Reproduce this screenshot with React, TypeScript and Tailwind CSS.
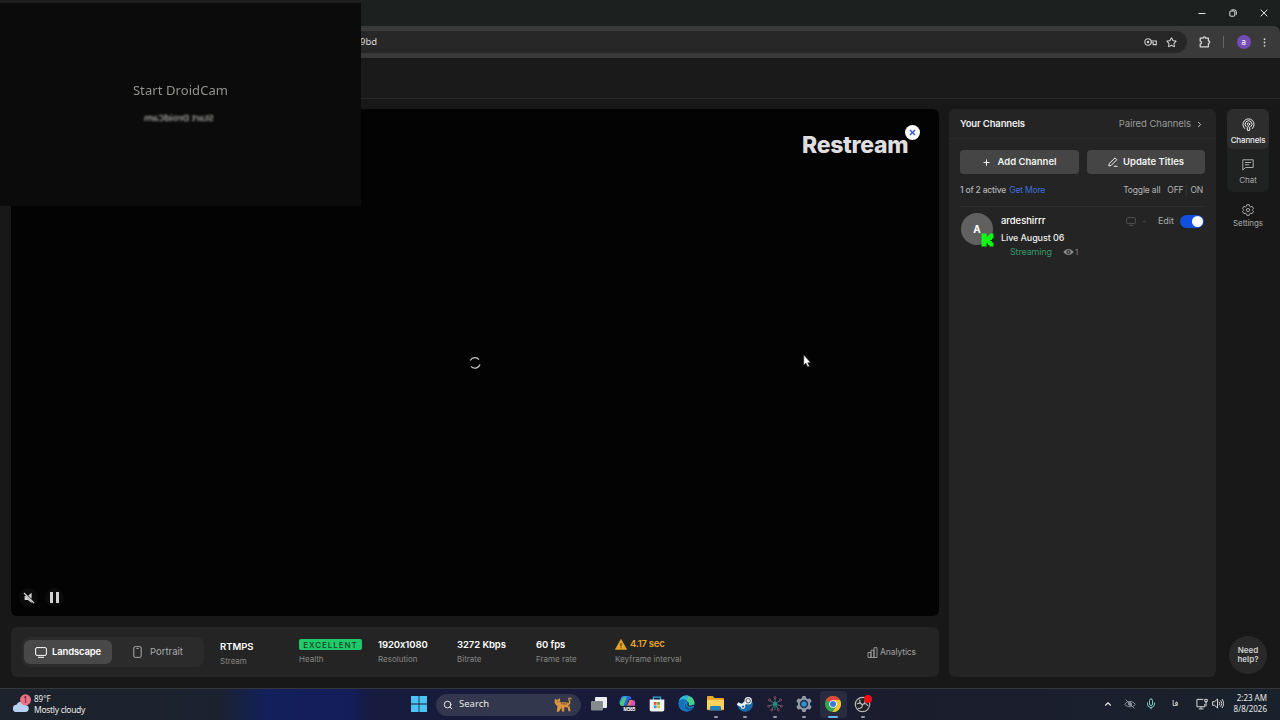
import type { ReactNode } from "react";
import { ChevronRight, ChevronUp, Mic, Plus, Search, Star } from "lucide-react";

interface Stat {
  value: ReactNode;
  label: string;
}

const WarningIcon = () => (
  <svg className="h-[11px] w-3" viewBox="0 0 12 11">
    <path d="M6 .3 11.8 10.6H.2z" fill="#e5a52b" stroke="#e5a52b" strokeWidth=".5" strokeLinejoin="round" />
    <path d="M6 4v3.2M6 8.2v1.1" stroke="#3a2c10" strokeWidth="1.1" />
  </svg>
);

const stats: Stat[] = [
  { value: "1920x1080", label: "Resolution" },
  { value: "3272 Kbps", label: "Bitrate" },
  { value: "60 fps", label: "Frame rate" },
];

const BrowserChrome = () => (
  <header className="shrink-0">
    <div className="flex h-[26px] items-center justify-end bg-[#1c201f] pr-[12px]">
      <div className="flex items-center gap-[23px] text-[#e4e4e4]">
        <svg className="h-2 w-2" viewBox="0 0 8 8" fill="none" stroke="currentColor">
          <path d="M.5 4.5h7" />
        </svg>
        <svg className="h-2 w-2" viewBox="0 0 8 8" fill="none" stroke="currentColor">
          <rect x=".8" y="2" width="5" height="5.2" rx="1" />
          <path d="M2.4.9h3.2A1.8 1.8 0 0 1 7.3 2.7v3" />
        </svg>
        <svg className="h-2 w-2" viewBox="0 0 8 8" fill="none" stroke="currentColor">
          <path d="m.7.7 6.6 6.6M7.3.7.7 7.3" />
        </svg>
      </div>
    </div>
    <div className="flex h-8 items-center rounded-tr-md bg-[#3a3a3a] pr-[14px]">
      <div className="flex h-[22px] w-[1187px] items-center justify-between rounded-r-full bg-[#272727] pr-[10px] pl-[360px]">
        <span className="font-['Noto_Sans',sans-serif] text-[9.5px] text-[#d5d5d5]">9bd</span>
        <div className="flex items-center gap-[9px] text-[#d0d0d0]">
          <svg className="h-2 w-[13px]" viewBox="0 0 13 8" fill="none" stroke="currentColor" strokeWidth="1.1">
            <circle cx="4" cy="4" r="3.2" />
            <circle cx="4" cy="4" r=".7" />
            <path d="M7 3h5.3v3.6H9.2V4.8H7" />
          </svg>
          <Star className="size-[11px]" strokeWidth={2.3} />
        </div>
      </div>
      <div className="flex flex-1 items-center justify-between pl-3 text-[#d6d6d6]">
        <svg className="h-3 w-3" viewBox="0 0 12 12" fill="none" stroke="currentColor" strokeWidth="1.3" strokeLinejoin="round">
          <path d="M1.2 2.2h3C4.2.4 6.6.4 6.6 2.2h2.8V5c1.8 0 1.8 2.3 0 2.3v3.5H1.2V8c1.7-.3 1.7-2.4 0-2.8z" />
        </svg>
        <span className="h-3 w-px bg-[#666]" />
        <span className="flex size-[14px] items-center justify-center rounded-full bg-[#744bb7] text-[8px] text-white">a</span>
        <svg className="h-[9px] w-[3px]" viewBox="0 0 3 9" fill="currentColor">
          <circle cx="1.5" cy="1.2" r=".9" />
          <circle cx="1.5" cy="4.5" r=".9" />
          <circle cx="1.5" cy="7.8" r=".9" />
        </svg>
      </div>
    </div>
  </header>
);

const CameraOverlay = () => (
  <div className="absolute top-0 left-0 flex h-[206px] w-[361px] flex-col items-center border-t-[3px] border-[#1e1f1f] bg-[#0b0b0b] pt-[78px] font-['Noto_Sans',sans-serif] text-[#92928f]">
    <p className="text-[13px] leading-[18px] tracking-[0.08px] blur-[0.5px]">Start DroidCam</p>
    <p className="mt-[12px] mr-1 -scale-x-100 text-[9.5px] leading-[14px] font-semibold tracking-[-0.1px] text-[#a8a8a4] blur-[0.8px]">
      Start DroidCam
    </p>
  </div>
);

const Player = () => (
  <section className="relative h-[507px] rounded-md bg-[#030303]">
    <div className="absolute top-[21px] left-[791px] text-[23px] leading-[31px] font-extrabold tracking-[-0.3px] text-[#dedede]">
      Restream
    </div>
    <div className="absolute top-4 left-[894px] flex size-[15px] items-center justify-center rounded-full bg-white">
      <svg className="size-[7px]" viewBox="0 0 7 7" stroke="#3d5fd2" strokeWidth="1.6">
        <path d="m1 1 5 5M6 1 1 6" />
      </svg>
    </div>
    <svg className="absolute top-[248px] left-[458px] size-3" viewBox="0 0 12 12" fill="none" stroke="#c8c8c8" strokeWidth="1.2">
      <path d="M1.3 3.6a5.2 5.2 0 0 1 8.7-1M2 9.3a5.2 5.2 0 0 0 9-1.9" />
    </svg>
    <svg className="absolute top-[245px] left-[792px] h-[14px] w-[9px]" viewBox="0 0 9 14" fill="#fff" stroke="#111" strokeWidth=".6">
      <path d="M.7.8v10.4l2.3-2 1.7 3.9 1.8-.8-1.7-3.6h3z" />
    </svg>
    <div className="absolute bottom-[9px] left-[8px] flex gap-[7px] text-[#d2d2d2]">
      <span className="flex size-[19px] items-center justify-center rounded-full bg-[#0b0b0b]">
        <svg className="size-3" viewBox="0 0 12 12" fill="currentColor">
          <path d="M1.6 4.1h1.7l5.3 5.2v1.8L5 8.1H1.6zM5.300 3.500l3.300-2.700v6z" />
          <path d="m1 1 10 10" stroke="currentColor" strokeWidth="1.2" />
        </svg>
      </span>
      <span className="flex size-[19px] items-center justify-center gap-[3px] rounded-full bg-[#0b0b0b]">
        <i className="h-[11px] w-[3px] bg-current" />
        <i className="h-[11px] w-[3px] bg-current" />
      </span>
    </div>
  </section>
);

const StreamBar = () => (
  <section className="mt-[11px] flex h-[50px] items-center rounded-md bg-[#242424] pr-[23px] pl-[11px]">
    <div className="flex h-[30px] w-[182px] items-center rounded-lg bg-[#2b2b2b] pl-[2px] text-[9.5px]">
      <div className="flex h-6 w-[88px] items-center justify-center gap-[5px] rounded-md bg-[#484848] font-semibold text-white">
        <svg className="h-[11px] w-3" viewBox="0 0 12 11" fill="none" stroke="currentColor">
          <rect x=".6" y=".6" width="10.8" height="7.8" rx="1.4" />
          <path d="M3 10.3h6" />
        </svg>
        <span className="pt-px tracking-[-0.15px]">Landscape</span>
      </div>
      <div className="flex flex-1 items-center justify-center gap-[8px] text-[#aaa]">
        <svg className="h-3 w-[9px]" viewBox="0 0 9 12" fill="none" stroke="currentColor">
          <rect x=".8" y=".6" width="7.4" height="10.8" rx="1.4" />
          <path d="M3.5 2.5h2" />
        </svg>
        <span className="pt-px">Portrait</span>
      </div>
    </div>
    <div className="flex pl-4 text-[8px] text-[#878787]">
      <div className="w-[79px] pt-[3px]">
        <div className="h-[14px] text-[9.5px] leading-[14px] font-semibold text-white">RTMPS</div>
        <div className="leading-[14px]">Stream</div>
      </div>
      <div className="w-[79px] pt-px">
        <div className="flex h-[14px] items-center">
          <span className="flex h-[11px] w-[63px] items-center justify-center rounded-[2px] bg-[#20ca68] text-[8px] font-medium tracking-[0.95px] text-[#123f26]">
            EXCELLENT
          </span>
        </div>
        <div className="leading-[14px]">Health</div>
      </div>
      {stats.map((stat) => (
        <div key={stat.label} className="w-[79px] pt-px">
          <div className="h-[14px] text-[9.5px] leading-[14px] font-semibold tracking-[-0.07px] text-white">{stat.value}</div>
          <div className="leading-[14px]">{stat.label}</div>
        </div>
      ))}
      <div className="pt-px">
        <div className="flex h-[14px] items-center gap-[3px] text-[9.5px] font-semibold tracking-[-0.25px] text-[#e5a52b]">
          <WarningIcon />
          4.17 sec
        </div>
        <div className="leading-[14px]">Keyframe interval</div>
      </div>
    </div>
    <div className="ml-auto flex items-center gap-[2px] pt-px text-[8.5px] tracking-[-0.1px] text-[#a2a2a2]">
      <svg className="h-[11px] w-[11px]" viewBox="0 0 10 11" fill="none" stroke="currentColor" strokeWidth=".9">
        <path d="M.5 5.500h3v5h-3zM3.500 3.200h3v7.300h-3zM6.500.7h3v9.800h-3z" />
      </svg>
      Analytics
    </div>
  </section>
);

const ChannelsPanel = () => (
  <aside className="h-[568px] w-[267px] rounded-md bg-[#242424]">
    <div className="flex h-[30px] items-center justify-between border-b border-[#2b2b2b] pt-[2px] pr-3 pl-[11px]">
      <h2 className="text-[9.5px] font-semibold tracking-[-0.15px] text-[#eee]">Your Channels</h2>
      <div className="flex items-center gap-1 text-[9.5px] tracking-[-0.05px] text-[#999]">
        Paired Channels
        <ChevronRight className="size-[9px] text-[#ccc]" strokeWidth={2.5} />
      </div>
    </div>
    <div className="mt-[11px] flex gap-2 pl-[11px] text-[9.5px] font-semibold text-[#f2f2f2]">
      <button className="flex h-6 w-[119px] items-center justify-center gap-[6px] rounded bg-[#454545]">
        <Plus className="size-[9px]" strokeWidth={2.7} />
        Add Channel
      </button>
      <button className="flex h-6 w-[118px] items-center justify-center gap-[5px] rounded bg-[#454545]">
        <svg className="size-[10px]" viewBox="0 0 10 10" fill="none" stroke="currentColor" strokeLinejoin="round">
          <path d="m.8 9 .5-2.5L7 .9l1.8 1.8L3.2 8.4zM5.8 9.3h3.7" />
        </svg>
        Update Titles
      </button>
    </div>
    <div className="mx-[11px] flex h-[33px] items-center justify-between border-b border-[#2d2d2d] pt-px pr-[2px] text-[8.5px] text-[#b4b4b4]">
      <p className="tracking-[-0.18px]">
        <span className="font-medium">1 of 2 active</span> <span className="ml-px text-[#3d70dd]">Get More</span>
      </p>
      <div className="flex items-center tracking-[-0.15px]">
        <span>Toggle all</span>
        <span className="ml-[7px]">OFF</span>
        <span className="mx-[3px] h-[11px] w-px bg-[#323232]" />
        <span>ON</span>
      </div>
    </div>
    <div className="flex pt-[6px] pr-3 pl-3">
      <div className="relative flex size-8 items-center justify-center rounded-full bg-[#606060] text-[10px] font-bold text-white">
        A
        <svg className="absolute top-[20px] left-[20px] h-[14px] w-[13px]" viewBox="0 0 13 14" fill="#0cfc15">
          <path d="M.5.5h5v3H7V2h1.500V.5h4v5H11V7H9.500v1H11v1.500h1.500v4h-4V12H7v-1.500H5.500v3h-5z" />
        </svg>
      </div>
      <div className="flex-1 pl-2">
        <div className="flex h-[16px] items-center text-[9.5px]">
          <span className="font-medium tracking-[-0.05px] text-white">ardeshirrr</span>
          <svg className="ml-auto h-[9px] w-[10px] text-[#505050]" viewBox="0 0 10 9" fill="none" stroke="currentColor">
            <rect x=".6" y=".6" width="8.8" height="6" rx="1" />
            <path d="M3 8.3h4" />
          </svg>
          <span className="ml-[7px] h-px w-[3px] bg-[#444]" />
          <span className="ml-3 text-[9px] text-[#aaa]">Edit</span>
          <span className="ml-[6px] flex h-[13px] w-[24px] items-center justify-end rounded-full bg-[#1150df] pr-[1px]">
            <i className="size-[11px] rounded-full bg-white" />
          </span>
        </div>
        <div className="h-[16px] text-[9px] leading-[18px] font-medium tracking-[-0.1px] text-[#ededed]">Live August 06</div>
        <div className="flex h-[14px] items-center pl-[9px] text-[9px] tracking-[-0.15px] text-[#37966a]">
          Streaming
          <svg className="ml-[11px] h-2 w-[11px]" viewBox="0 0 11 8" fill="none">
            <path d="M.4 4C3 .1 8 .1 10.6 4 8 7.900 3 7.900.4 4z" fill="#8b8b8b" />
            <circle cx="5.500" cy="4" r="2.100" fill="#242424" />
            <circle cx="5.500" cy="4" r="1" fill="#8b8b8b" />
          </svg>
          <span className="ml-[1px] text-[8px] text-[#888]">1</span>
        </div>
      </div>
    </div>
  </aside>
);

const SideNav = () => (
  <nav className="flex w-[42px] flex-col items-center text-[8px] text-[#aaa]">
    <div className="h-[83px] w-full rounded-md bg-[#202221]">
      <div className="flex h-10 flex-col items-center rounded-md bg-[#2d2d2d] pt-[9px] font-medium text-[#ededed]">
        <svg className="size-[13px]" viewBox="0 0 13 13" fill="none" stroke="currentColor" strokeLinecap="round">
          <path d="M2.600 10.500a5.600 5.600 0 1 1 7.800 0M4 8.700a3.500 3.500 0 1 1 5 0" />
          <circle cx="6.500" cy="6.200" r="1.200" />
          <path d="M5.300 12V9.300q1.200-1.300 2.400 0V12z" />
        </svg>
        <span className="mt-[3px] leading-3 tracking-[-0.15px]">Channels</span>
      </div>
      <div className="flex flex-col items-center pt-[10px]">
        <svg className="h-3 w-3" viewBox="0 0 12 12" fill="none" stroke="currentColor">
          <path d="M.8.8h10.4v7.7H3.6L.8 11zM3 3.500h6M3 5.800h4" />
        </svg>
        <span className="mt-[3px] leading-3">Chat</span>
      </div>
    </div>
    <div className="mt-3 flex flex-col items-center">
      <svg className="h-3 w-3" viewBox="0 0 24 24" fill="none" stroke="currentColor" strokeWidth="2" strokeLinejoin="round">
        <path d="m9.500 1.500h5l.8 3.200 2 1.100 3.200-.9 2.500 4.300-2.400 2.300v1l2.400 2.300-2.500 4.300-3.200-.9-2 1.100-.8 3.200h-5l-.8-3.200-2-1.100-3.200.9L1 14.800l2.400-2.300v-1L1 9.200l2.500-4.300 3.200.9 2-1.100z" />
        <circle cx="12" cy="12" r="3.200" />
      </svg>
      <span className="mt-px leading-3 tracking-[-0.1px]">Settings</span>
    </div>
    <div className="mt-auto mb-[3px] flex size-[38px] items-center justify-center rounded-full bg-[#292929] text-center text-[8px] leading-[9px] font-semibold text-[#d0d0d0]">
      Need
      <br />
      help?
    </div>
  </nav>
);

const TaskItem = ({ children, running, active }: { children: ReactNode; running?: boolean; active?: boolean }) => (
  <div className={`relative flex h-[27px] w-[27px] items-center justify-center rounded-sm pb-[2px] ${active ? "bg-[#292c3e]" : ""}`}>
    {children}
    {running && <i className={`absolute bottom-0 h-[2px] rounded-full ${active ? "w-[10px] bg-[#62b8ea]" : "w-1 bg-[#969ba6]"}`} />}
  </div>
);

const Taskbar = () => (
  <footer className="flex h-8 shrink-0 items-center border-t border-[#34383d] bg-[linear-gradient(90deg,#1c232c_0,#1a222f_220px,#13205a_265px,#131d59_350px,#171b3d_375px,#181b36_700px,#1b1d2d_900px,#19222c_1280px)] font-['Noto_Sans',sans-serif] text-[#e8e8e8]">
    <div className="flex w-[405px] items-center self-stretch pb-[2px] pl-3">
      <div className="relative h-5 w-[20px]">
        <svg className="h-5 w-[19px]" viewBox="0 0 18 20">
          <path d="M4 18a3.6 3.6 0 0 1 0-7.2 5 5 0 0 1 9.4.5A3.4 3.4 0 0 1 13.5 18z" fill="#b7d0f4" />
          <circle cx="13" cy="5.8" r="5.500" fill="#ed7185" />
        </svg>
        <span className="absolute top-0 left-[11px] text-[8px] leading-3 text-[#34151c]">1</span>
      </div>
      <div className="ml-[2px] text-[8.5px] leading-[11px]">
        <div className="text-[8px]">89°F</div>
        <div className="tracking-[-0.3px]">Mostly cloudy</div>
      </div>
    </div>
    <div className="flex items-center">
      <TaskItem>
        <svg className="size-4" viewBox="0 0 16 16" fill="#4cc4f3">
          <path d="M0 0h7.600v7.600H0zM8.400 0H16v7.600H8.400zM0 8.400h7.600V16H0zM8.400 8.400H16V16H8.400z" />
        </svg>
      </TaskItem>
      <div className="ml-1 flex h-[22px] w-[145px] items-center rounded-full bg-[#32374d] pr-2 pl-[7px] text-[9.5px]">
        <Search className="size-[10px]" strokeWidth={2.4} />
        <span className="ml-[6px]">Search</span>
        <svg className="ml-auto h-[17px] w-5" viewBox="0 0 20 17">
          <path d="M2 2.500 3.500 3.800 5.300 3.600 7 2l.2 4.300h6.300l2 .7c1.300-1.200 0-2.200-.3-3.300C14.800 1.500 18 .5 18.600 2.800c.2.8-1 .7-1.200.1-1-.6-1.300.4-.5 1.400 1.200 1.700.4 3.500-.7 4.600l.7 3 .7 3.300h-2l-1-3.800-3.300-.5v4.700H9l-.7-4.200-2.300 4.400H3.700l.8-5.800C2.500 9 1 7.300 2 2.500z" fill="#d9953f" />
          <path d="m8.500 6.500.5 2m2-2v2.200m2.400-2-.5 2M15 10l1.500-1M4 5.800h.8m.9 0h.7" stroke="#614025" strokeWidth=".9" />
        </svg>
      </div>
      <div className="ml-[4px] flex gap-[2.35px]">
        <TaskItem>
          <svg className="h-[15px] w-4" viewBox="0 0 16 15">
            <rect x="4" y="1" width="12" height="11" rx="1" fill="#eee" />
            <rect x="0" y="5" width="12" height="9.500" rx="1" fill="#868b8f" />
          </svg>
        </TaskItem>
        <TaskItem>
          <svg className="size-[17px]" viewBox="0 0 17 17">
            <path d="M5 1h5L7 10H3C0 10 0 7 1.500 4.500 2.200 2.300 3 1 5 1z" fill="#269ce8" />
            <path d="M1 8.200 4 3l4-1-2.500 9H3C1.500 11 .8 10 1 8.200z" fill="#50c37a" />
            <path d="M9 1c3 0 3 1.400 3.700 3.300H9.800L7.500 12H4l3-8C7.500 2.300 8 1 9 1z" fill="#2a66da" />
            <path d="M10.400 5h3.200c3 0 3 3.200 2 6L14.500 14H7.600z" fill="#d253b3" />
            <path d="m8 11 2.600-5.800h2L10.500 12z" fill="#f47b57" />
            <rect x="4" y="10.800" width="12.500" height="5.600" rx="1" fill="#171a2b" />
            <text x="4.300" y="15.500" fontSize="5" fontWeight="700" fill="#fff" textLength="12">M365</text>
          </svg>
        </TaskItem>
        <TaskItem>
          <svg className="size-4" viewBox="0 0 16 16">
            <path d="M4.500 4V1.200h7V4" fill="none" stroke="#35a9dc" strokeWidth="1.300" />
            <path d="M.7 3.500h14.600v10.200a1.800 1.800 0 0 1-1.800 1.800h-11a1.800 1.800 0 0 1-1.800-1.800z" fill="#f1f3f3" />
            <path d="M4.800 6h2.800v2.800H4.800z" fill="#e7543d" />
            <path d="M8.200 6H11v2.800H8.200z" fill="#70ab38" />
            <path d="M4.800 9.400h2.800v2.800H4.800z" fill="#359ed3" />
            <path d="M8.200 9.400H11v2.800H8.200z" fill="#eab42b" />
          </svg>
        </TaskItem>
        <TaskItem>
          <svg className="size-[17px]" viewBox="0 0 17 17">
            <circle cx="8.500" cy="8.500" r="8" fill="#1685cc" />
            <path d="M1 6C3.300-1.400 15-.9 16.400 7c.5 3-2 4.800-4.800 4.300-2.500-.4-1.500-1.800-1.200-2.800C9.700 4.700 4 3 1 6z" fill="#48cf8d" />
            <path d="M1 6C2.300 1.500 7-.3 10.700 1c-1 2.500-2 4-1.500 5C6 3.300 3.300 4 1 6z" fill="#2fb4d6" />
            <path d="M1 6c3.300-3 7.200-1.800 9 .9-3.200-1-5 1.700-3.800 4.200 1.400 3.200 5.300 4.200 8.300 2.300C11 18 2.300 17.500.8 10.600.5 9 .5 7.400 1 6z" fill="#1672bd" />
            <path d="M10 6.900c-3 .5-3 5 .8 6.200 1.800.5 3.500-.2 5-.9-.4 1-1 1.600-2 2.200-5.400 1.700-10-4.700-3.800-7.500z" fill="#144985" />
            <path d="M9.700 7.500c1.400.5.1 1.800.3 2.600.5 1.400 4 1.600 5.600-.2" fill="none" stroke="#1c2440" strokeWidth="1.300" />
          </svg>
        </TaskItem>
        <TaskItem running>
          <svg className="h-[15px] w-[17px]" viewBox="0 0 17 15">
            <path d="M0 1.200C0 .5.500 0 1.200 0h4.500l2 2h8c.8 0 1.300.5 1.300 1.200V13c0 .8-.5 1.200-1.200 1.200H1.200C.5 14.200 0 13.700 0 13z" fill="#e8a829" />
            <path d="M0 4h17v9.200H0z" fill="#fbd35c" />
            <path d="M3 14.500v-3c0-1 .5-1.500 1.500-1.500h8c1 0 1.500.5 1.500 1.500v3z" fill="#2781bb" />
          </svg>
        </TaskItem>
        <TaskItem running>
          <svg className="size-4" viewBox="0 0 16 16">
            <path d="M.6 8.500 7 6l8.600 0A7.700 7.700 0 0 1 .6 10z" fill="#1a6aa8" />
            <path d="m.5 7.500 5 2.300 3-3.600" fill="none" stroke="#eef2f5" strokeWidth="3" />
            <circle cx="11.200" cy="4.800" r="3.700" fill="#eef2f5" />
            <circle cx="11.200" cy="4.800" r="2.200" fill="none" stroke="#26304b" strokeWidth=".8" />
            <circle cx="6" cy="10.600" r="2.300" fill="#eef2f5" />
            <circle cx="6" cy="10.600" r="1.200" fill="#1a6aa8" />
          </svg>
        </TaskItem>
        <TaskItem running>
          <svg className="size-4" viewBox="0 0 16 16" fill="none">
            <path d="M8 8V2M8 8v6M8 8 3 4.500M8 8l5-3.500M8 8l-6 2M8 8l6 2M8 8 5 13M8 8l3 5" stroke="#3c9783" strokeWidth=".8" />
            <circle cx="8" cy="8" r="2.200" fill="#268a7b" />
            <g stroke="#a34e60" strokeWidth=".8">
              <circle cx="8" cy="1.500" r="1" />
              <circle cx="2.400" cy="4" r="1.100" />
              <circle cx="13.600" cy="4" r="1.100" />
              <circle cx="1.600" cy="10.200" r="1" />
              <circle cx="14.400" cy="10.200" r="1" />
              <circle cx="4.700" cy="14" r="1" />
              <circle cx="11.300" cy="14" r="1" />
            </g>
          </svg>
        </TaskItem>
        <TaskItem running>
          <svg className="size-4" viewBox="0 0 16 16">
            <path d="M6.400 0h3.200l.5 2.200 1.600.9L14 2.400l1.700 2.800L14 6.900v2.200l1.700 1.700-1.700 2.800-2.300-.7-1.600.9-.5 2.200H6.400l-.5-2.200-1.600-.9-2.300.7-1.700-2.800L2 9.100V6.900L.3 5.200 2 2.400l2.300.7 1.600-.9z" fill="#909baa" />
            <circle cx="8" cy="8" r="4.200" fill="#26364f" />
            <circle cx="8" cy="8" r="2.600" fill="#348fd0" />
          </svg>
        </TaskItem>
        <TaskItem running active>
          <svg className="size-4" viewBox="0 0 16 16">
            <circle cx="8" cy="8" r="8" fill="#36a552" />
            <path d="M8 8 1.100 4A8 8 0 0 1 14.900 4H8z" fill="#e74436" />
            <path d="M8 4h6.900A8 8 0 0 1 7.500 16L11.500 10z" fill="#fac331" />
            <circle cx="8" cy="8" r="3.800" fill="#fff" />
            <circle cx="8" cy="8" r="3" fill="#3979dc" />
          </svg>
        </TaskItem>
        <TaskItem running>
          <svg className="size-[18px]" viewBox="0 0 18 18" fill="none">
            <circle cx="8.500" cy="9.500" r="7.200" fill="#202124" stroke="#b8b8b8" strokeWidth="1.200" />
            <path d="M6 4.500c-.7 2.200 0 4 2.500 5 2.700-1.600 4.700-.8 5.200 1.700M8.500 9.500c0 3-2 4.400-4.800 3.800M3 9c1.700-1.300 3.600-1 5 .8m.7-.3c2-.8 2.700-2.200 2.200-4" stroke="#bdbdbd" strokeWidth="1.100" />
            <circle cx="14" cy="4" r="4" fill="#f10f16" />
          </svg>
        </TaskItem>
      </div>
    </div>
    <div className="ml-auto flex items-center pr-[13px] pb-[2px]">
      <ChevronUp className="size-[10px]" strokeWidth={2.6} />
      <svg className="ml-[11px] h-[10px] w-3 text-[#89909a]" viewBox="0 0 12 10" fill="none" stroke="currentColor">
        <path d="M.7 5.500C3 1.400 8.600 1.200 11.300 5.500 9 8.500 3.700 8.500.7 5.500zM1.500.5l9 9" />
        <circle cx="6" cy="5" r="1.500" fill="currentColor" />
      </svg>
      <Mic className="ml-[9px] size-3 text-[#81c9c3]" strokeWidth={2} />
      <span className="ml-[15px] w-2 font-['DejaVu_Sans',sans-serif] text-[8px]">فا</span>
      <svg className="ml-[16px] h-3 w-[12px]" viewBox="0 0 13 12" fill="none" stroke="currentColor">
        <path d="M8 1H1v8h8.500V6M3 11.300h5M5.500 9v2M9.500 1h2.700v2.500H9.500zM10.900 3.500v5" />
      </svg>
      <svg className="ml-[4px] h-[11px] w-3" viewBox="0 0 12 11" fill="none" stroke="currentColor" strokeWidth=".9">
        <path d="M.6 3.700h2L5.500 1v9L2.600 7.300h-2zM7 3.700q1.500 1.800 0 3.600M8.600 2.300q2.600 3.200 0 6.400M10 1q3.300 4.500 0 9" />
      </svg>
      <div className="ml-[9px] flex w-[34px] flex-col items-end text-[8px] leading-[10.5px] whitespace-nowrap">
        <span>2:23 AM</span>
        <span>8/8/2026</span>
      </div>
    </div>
  </footer>
);

export default function App() {
  return (
    <div className="relative flex h-[720px] w-[1280px] flex-col overflow-hidden bg-[#181818] font-['Inter',sans-serif]">
      <BrowserChrome />
      <div className="h-[41px] shrink-0 border-b border-[#272727] bg-[#1a1a1a]" />
      <main className="flex flex-1 pt-[10px] pl-[11px]">
        <div className="w-[928px]">
          <Player />
          <StreamBar />
        </div>
        <div className="ml-[10px] flex h-[568px] gap-[11px]">
          <ChannelsPanel />
          <SideNav />
        </div>
      </main>
      <Taskbar />
      <CameraOverlay />
    </div>
  );
}
